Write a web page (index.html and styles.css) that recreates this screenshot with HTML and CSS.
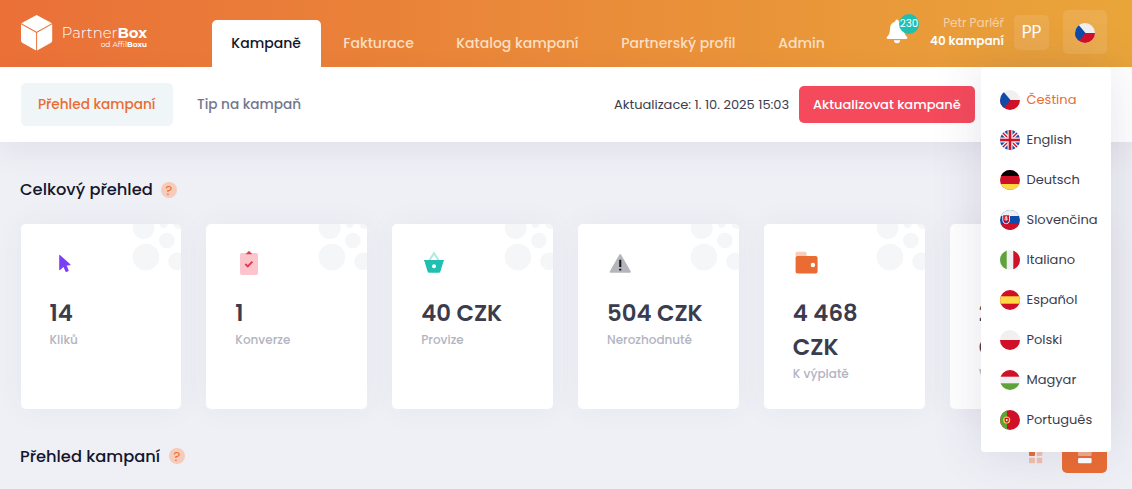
FILE: index.html
```html
<!DOCTYPE html>
<html lang="cs">
<head>
    <meta charset="UTF-8">
    <meta name="viewport" content="width=device-width, initial-scale=1.0">
    <title>PartnerBox</title>
    <link rel="stylesheet" href="styles.css">
</head>
<body>
    <svg class="defs" width="0" height="0">
        <symbol id="flag-cz" viewBox="0 0 20 20">
            <rect width="20" height="20" fill="#f0f0f0"/>
            <rect y="10" width="20" height="10" fill="#d01027"/>
            <path d="M0 0h2l8.500 10L2 20H0z" fill="#0f4ba8"/>
        </symbol>
        <symbol id="bubbles" viewBox="0 0 50 50">
            <g fill="#f5f6f8">
                <circle cx="12.700" cy="4" r="11"/>
                <circle cx="32.700" cy="0" r="4"/>
                <circle cx="48.200" cy="-1" r="6"/>
                <circle cx="35.900" cy="16.500" r="7.800"/>
                <circle cx="14.900" cy="33" r="13.300"/>
                <circle cx="45.900" cy="37.300" r="8.700"/>
            </g>
        </symbol>
    </svg>

    <header class="header">
        <a class="logo" href="#">
            <svg width="32" height="36" viewBox="0 0 32 36">
                <path d="M15.600 0 31 8.200 15.600 16.800 0.300 8.200z" fill="#fff"/>
                <path d="M0 9.200 15.100 17.700V35.600L1.200 27.800Q0 27 0 25.800z" fill="#fff"/>
                <path d="M31.200 9.200 16.100 17.700V35.600L30 27.800Q31.200 27 31.200 25.800z" fill="#fff"/>
            </svg>
            <span class="logo-text">
                <span class="logo-name">Partner<b>Box</b></span>
                <span class="logo-sub">od Affil<b>Boxu</b></span>
            </span>
        </a>
        <nav class="nav">
            <a class="nav-item active" href="#">Kampaně</a>
            <a class="nav-item fakturace" href="#">Fakturace</a>
            <a class="nav-item katalog" href="#">Katalog kampaní</a>
            <a class="nav-item profil" href="#">Partnerský profil</a>
            <a class="nav-item admin" href="#">Admin</a>
        </nav>
        <div class="topbar">
            <div class="bell">
                <svg width="22" height="26" viewBox="0 0 22 26">
                    <path d="M11 .5c1 0 1.700.7 1.800 2C16 3.400 17.700 6 17.900 9c.3 4.600.6 6.500 3 8.800.9 1 .5 2.200-.8 2.200H1.900C.6 20 .2 18.800 1.100 17.800c2.400-2.300 2.700-4.200 3-8.800C4.300 6 6 3.400 9.200 2.500 9.300 1.200 10 .5 11 .5zM7.800 21.300h6.400c-.3 2-1.400 3-3.200 3s-2.900-1-3.200-3z" fill="#fff"/>
                </svg>
                <span class="badge">230</span>
            </div>
            <div class="user">
                <span class="user-name">Petr Parléř</span>
                <span class="user-info">40 kampaní</span>
            </div>
            <div class="avatar">PP</div>
            <div class="lang">
                <svg class="flag" width="20" height="20"><use href="#flag-cz"/></svg>
                <ul class="lang-menu">
                    <li class="selected">
                        <svg class="flag" width="20" height="20"><use href="#flag-cz"/></svg>
                        <span>Čeština</span>
                    </li>
                    <li>
                        <svg class="flag" width="20" height="20" viewBox="0 0 20 20">
                            <rect width="20" height="20" fill="#0f4ba8"/>
                            <path d="M0 0 20 20M20 0 0 20" stroke="#f0f0f0" stroke-width="4"/>
                            <path d="M0 0 20 20M20 0 0 20" stroke="#d01027" stroke-width="1.300"/>
                            <path d="M10 0V20M0 10H20" stroke="#f0f0f0" stroke-width="5"/>
                            <path d="M10 0V20M0 10H20" stroke="#d01027" stroke-width="2.600"/>
                        </svg>
                        <span>English</span>
                    </li>
                    <li>
                        <svg class="flag" width="20" height="20" viewBox="0 0 20 20">
                            <rect width="20" height="20" fill="#d01027"/>
                            <rect width="20" height="6" fill="#000"/>
                            <rect y="14" width="20" height="6" fill="#ffda44"/>
                        </svg>
                        <span>Deutsch</span>
                    </li>
                    <li>
                        <svg class="flag" width="20" height="20" viewBox="0 0 20 20">
                            <rect width="20" height="20" fill="#0f4ba8"/>
                            <rect width="20" height="6" fill="#f0f0f0"/>
                            <rect y="14" width="20" height="6" fill="#d01027"/>
                            <path d="M2.300 4.500H10V10c0 2.400-1.600 3.600-3.850 4.300C3.900 13.600 2.300 12.400 2.300 10z" fill="#f0f0f0"/>
                            <path d="M3.200 5.300H9.100V10c0 1.900-1.200 2.900-2.950 3.400C4.400 12.900 3.200 11.900 3.200 10z" fill="#d01027"/>
                            <path d="M6.150 6v5M4.900 7.300h2.500M4.300 9.100h3.700" stroke="#f0f0f0" stroke-width=".9"/>
                            <path d="M4.200 11.800a2 1.500 0 0 1 3.900 0l-1.950 1.300z" fill="#0f4ba8"/>
                        </svg>
                        <span>Slovenčina</span>
                    </li>
                    <li>
                        <svg class="flag" width="20" height="20" viewBox="0 0 20 20">
                            <rect width="20" height="20" fill="#f0f0f0"/>
                            <rect width="6.700" height="20" fill="#5fa23a"/>
                            <rect x="13.300" width="6.700" height="20" fill="#d01027"/>
                        </svg>
                        <span>Italiano</span>
                    </li>
                    <li>
                        <svg class="flag" width="20" height="20" viewBox="0 0 20 20">
                            <rect width="20" height="20" fill="#d01027"/>
                            <rect y="6.300" width="20" height="7.400" fill="#ffda44"/>
                        </svg>
                        <span>Español</span>
                    </li>
                    <li>
                        <svg class="flag" width="20" height="20" viewBox="0 0 20 20">
                            <rect width="20" height="20" fill="#f0f0f0"/>
                            <rect y="10" width="20" height="10" fill="#d01027"/>
                        </svg>
                        <span>Polski</span>
                    </li>
                    <li>
                        <svg class="flag" width="20" height="20" viewBox="0 0 20 20">
                            <rect width="20" height="20" fill="#f0f0f0"/>
                            <rect width="20" height="6.700" fill="#d01027"/>
                            <rect y="13.300" width="20" height="6.700" fill="#5fa23a"/>
                        </svg>
                        <span>Magyar</span>
                    </li>
                    <li>
                        <svg class="flag" width="20" height="20" viewBox="0 0 20 20">
                            <rect width="20" height="20" fill="#d01027"/>
                            <rect width="7" height="20" fill="#5fa23a"/>
                            <circle cx="6.700" cy="10" r="3.500" fill="#ffda44"/>
                            <path d="M4.600 7.700h4.200v2.900a2.100 2.100 0 0 1-4.200 0z" fill="#d01027"/>
                            <path d="M5.900 9h1.600v1.500a.8.8 0 0 1-1.600 0z" fill="#f0f0f0"/>
                        </svg>
                        <span>Português</span>
                    </li>
                </ul>
            </div>
        </div>
    </header>

    <div class="subheader">
        <a class="sub-item active" href="#">Přehled kampaní</a>
        <a class="sub-item" href="#">Tip na kampaň</a>
        <span class="updated">Aktualizace: 1. 10. 2025 15:03</span>
        <button class="btn-update">Aktualizovat kampaně</button>
    </div>

    <main class="content">
        <div class="title-row">
            <h2 class="title t1">Celkový přehled</h2>
            <span class="help">?</span>
        </div>

        <div class="cards">
            <div class="card">
                <svg class="bubbles" width="50" height="50"><use href="#bubbles"/></svg>
                <svg class="icon" width="28" height="28" viewBox="0 0 28 28">
                    <path d="M9.200 5.600Q9.200 4.300 10.200 5.200L20.300 14.200Q21 15.200 19.900 15.300L16.700 15.600 18.700 20.400Q18.700 21 18.200 21.300L16.400 22Q15.800 22 15.500 21.500L13.500 16.900 10.200 20Q9.200 20.500 9.200 19.300z" fill="#7a3ff5"/>
                </svg>
                <div class="value">14</div>
                <div class="label">Kliků</div>
            </div>
            <div class="card">
                <svg class="bubbles" width="50" height="50"><use href="#bubbles"/></svg>
                <svg class="icon" width="28" height="28" viewBox="0 0 28 28">
                    <rect x="5" y="3" width="18" height="22" rx="2" fill="#fbc5cb"/>
                    <path d="M11 4.200Q11 2.700 12.300 2.700 12.600 1.300 14 1.300T15.700 2.700Q17 2.700 17 4.200z" fill="#dd3d50"/>
                    <path d="M10.300 14 12.800 16.400 17.400 11.600" fill="none" stroke="#dd3d50" stroke-width="1.900"/>
                </svg>
                <div class="value">1</div>
                <div class="label">Konverze</div>
            </div>
            <div class="card">
                <svg class="bubbles" width="50" height="50"><use href="#bubbles"/></svg>
                <svg class="icon" width="28" height="28" viewBox="0 0 28 28">
                    <path d="M7.500 11.500 13 3.300 18.500 11.500" fill="none" stroke="#aee7e0" stroke-width="1.900"/>
                    <path d="M3.400 10H22.600Q23.300 10 23.100 10.900H22.600L19.500 21.200Q19 22.700 17.600 22.700H8.400Q7 22.700 6.500 21.200L3.400 10.900H2.900Q2.700 10 3.400 10z" fill="#1fbfb1"/>
                    <circle cx="13" cy="16.200" r="2" fill="#fff"/>
                </svg>
                <div class="value">40 CZK</div>
                <div class="label">Provize</div>
            </div>
            <div class="card">
                <svg class="bubbles" width="50" height="50"><use href="#bubbles"/></svg>
                <svg class="icon" width="28" height="28" viewBox="0 0 28 28">
                    <path d="M12.400 4.500Q13.200 3.600 14 4.500L23.800 21.500Q24 22.700 23 22.700H3.500Q2.400 22.700 2.700 21.500z" fill="#b5b5bc"/>
                    <path d="M12.200 9.800h2.100v7.300h-2.100zM12.200 18.700h2.100v1.800h-2.100z" fill="#15161f"/>
                </svg>
                <div class="value">504 CZK</div>
                <div class="label">Nerozhodnuté</div>
            </div>
            <div class="card">
                <svg class="bubbles" width="50" height="50"><use href="#bubbles"/></svg>
                <svg class="icon" width="28" height="28" viewBox="0 0 28 28">
                    <rect x="2.600" y="1.800" width="11" height="8" rx="1.500" fill="#f8cdb9"/>
                    <path d="M4.600 6H22.600Q24.600 6 24.600 8V21.600Q24.600 23.600 22.600 23.600H4.600Q2.600 23.600 2.600 21.600V8Q2.600 6 4.600 6z" fill="#ea6c33"/>
                    <circle cx="19.900" cy="15" r="2.200" fill="#fff"/>
                </svg>
                <div class="value">4 468 CZK</div>
                <div class="label">K výplatě</div>
            </div>
            <div class="card">
                <div class="icon"></div>
                <div class="value">24<br>CZK</div>
                <div class="label">Vklad</div>
            </div>
        </div>

        <div class="title-row second">
            <h2 class="title t2">Přehled kampaní</h2>
            <span class="help">?</span>
            <div class="view-switch">
                <svg width="14" height="14" viewBox="0 0 14 14">
                    <rect width="6" height="6" rx="1" fill="#ea6c33"/>
                    <g fill="#f1c1ae">
                        <rect x="7.700" width="5.600" height="6" rx="1"/>
                        <rect y="7.700" width="6" height="5.500" rx="1"/>
                        <rect x="7.700" y="7.700" width="5.600" height="5.500" rx="1"/>
                    </g>
                </svg>
                <button class="btn-list">
                    <svg width="14" height="14" viewBox="0 0 14 14">
                        <rect y="0.500" width="13.600" height="5.500" rx="1" fill="#f1ab8a"/>
                        <rect y="8" width="13.600" height="5.200" rx="1.200" fill="#fff"/>
                    </svg>
                </button>
            </div>
        </div>
    </main>
</body>
</html>
```
FILE: styles.css
```css
* {
    box-sizing: border-box;
}

body {
    margin: 0;
    height: 489px;
    overflow: hidden;
    background-color: #eff0f6;
    color: #3b3c4d;
    font-family: Poppins, Inter, sans-serif;
    font-size: 13px;
}

a {
    text-decoration: none;
}

.defs {
    position: absolute;
}

.header {
    display: flex;
    height: 67px;
    padding: 0 25px 0 21px;
    background: linear-gradient(90deg, #ea7038, #e9a53a);
}

.logo {
    display: flex;
    width: 191px;
    padding-top: 15px;
    color: #fff;
}

.logo-text {
    display: flex;
    flex-direction: column;
    align-items: flex-end;
    width: 84px;
    margin-left: 10px;
    padding-top: 8px;
    font-family: Montserrat, Poppins, Inter, sans-serif;
    white-space: nowrap;
}

.logo-name {
    font-size: 14.8px;
    font-weight: 300;
    line-height: 20px;
}

.logo-name b {
    font-weight: 700;
}

.logo-sub {
    font-size: 7.5px;
    line-height: 4px;
}

.nav {
    display: flex;
    padding-top: 20px;
}

.nav-item {
    height: 47px;
    line-height: 46px;
    font-size: 14px;
    font-weight: 500;
    color: #fbdfc3;
    white-space: nowrap;
}

.nav-item.active {
    width: 109px;
    margin-right: 22.2px;
    padding-left: 19.3px;
    border-radius: 5px 5px 0 0;
    background-color: #fff;
    color: #15162c;
}

.fakturace {
    width: 113px;
}

.katalog {
    width: 165px;
}

.profil {
    width: 157px;
}

.topbar {
    display: flex;
    margin-left: auto;
}

.bell {
    position: relative;
    width: 34px;
    height: 32px;
    padding-top: 19px;
}

.badge {
    position: absolute;
    left: 13px;
    top: 14px;
    width: 20px;
    height: 20px;
    border-radius: 50%;
    background-color: #1fbfb1;
    color: #fff;
    font-size: 10.4px;
    line-height: 20px;
    text-align: center;
}

.user {
    display: flex;
    flex-direction: column;
    width: 84px;
    padding-top: 14px;
    text-align: right;
    line-height: 18px;
    font-size: 12px;
    white-space: nowrap;
}

.user-name {
    color: #f6d1a3;
}

.user-info {
    color: #fff;
    font-weight: 600;
}

.avatar {
    width: 35px;
    height: 35px;
    margin: 15px 14px 0 10px;
    border-radius: 5px;
    background-color: rgba(255, 255, 255, 0.1);
    color: #fff;
    font-size: 17px;
    font-weight: 400;
    line-height: 34px;
    text-align: center;
}

.lang {
    position: relative;
    width: 44px;
    height: 44px;
    margin-top: 10px;
    padding: 13px 12px;
    border-radius: 5px;
    background-color: rgba(255, 255, 255, 0.1);
}

.flag {
    display: block;
    flex: none;
    border-radius: 50%;
}

.lang-menu {
    position: absolute;
    z-index: 10;
    top: 57px;
    right: -4px;
    width: 130px;
    height: 385px;
    margin: 0;
    padding: 13px 0 0 19px;
    list-style: none;
    border-radius: 4px;
    background-color: #fff;
    box-shadow: 0 0 50px rgba(82, 63, 105, 0.15);
}

.lang-menu li {
    display: flex;
    align-items: center;
    height: 40px;
    gap: 6.5px;
    font-size: 13px;
}

.lang-menu .selected {
    color: #ea6c33;
}

.subheader {
    display: flex;
    align-items: center;
    height: 75px;
    padding: 0 157px 0 21px;
    background-color: #fff;
    box-shadow: 0 10px 30px rgba(82, 63, 105, 0.08);
}

.sub-item {
    height: 43px;
    line-height: 43px;
    font-size: 13.65px;
    font-weight: 500;
    color: #74768d;
    white-space: nowrap;
}

.sub-item.active {
    width: 152px;
    margin-right: 24px;
    padding-left: 17px;
    border-radius: 5px;
    background-color: #f0f5f8;
    color: #ea6c33;
}

.updated {
    width: 175px;
    margin: 0 10px 0 auto;
    white-space: nowrap;
}

.btn-update {
    width: 176px;
    height: 37px;
    padding: 0 0 0 14px;
    border: none;
    border-radius: 5px;
    background-color: #f5495c;
    color: #fff;
    font-family: inherit;
    font-size: 13px;
    font-weight: 500;
    text-align: left;
    white-space: nowrap;
}

.content {
    padding: 34px 21.5px 0 20.5px;
}

.title-row {
    display: flex;
    align-items: center;
    height: 28px;
    margin-bottom: 20px;
}

.title {
    margin: -1px 0 0 -0.5px;
    font-size: 16.3px;
    font-weight: 500;
    color: #15162c;
    white-space: nowrap;
}

.t1 {
    width: 141px;
}

.t2 {
    width: 149px;
    margin-top: 1px;
}

.help {
    width: 16px;
    height: 16px;
    border-radius: 50%;
    background-color: #f6cbb9;
    color: #ea6c33;
    font-size: 13px;
    font-weight: 400;
    line-height: 17px;
    text-align: center;
}

.cards {
    display: grid;
    grid-template-columns: repeat(6, minmax(0, 1fr));
    gap: 25px;
}

.card {
    position: relative;
    height: 185px;
    padding: 26px 28px 0 29px;
    border-radius: 5px;
    background-color: #fff;
    box-shadow: 0 0 30px rgba(82, 63, 105, 0.05);
}

.bubbles {
    position: absolute;
    top: 0;
    right: 0;
    overflow: hidden;
    border-top-right-radius: 5px;
}

.icon {
    display: block;
    height: 28px;
}

.value {
    margin-top: 18px;
    font-size: 22.8px;
    font-weight: 600;
    line-height: 34px;
}

.label {
    margin-top: 1px;
    font-size: 12px;
    font-weight: 500;
    line-height: 18px;
    color: #b3b4c2;
    white-space: nowrap;
}

.second {
    margin-top: 33px;
}

.view-switch {
    display: flex;
    align-items: center;
    gap: 19px;
    margin: 1px 3.5px 0 auto;
}

.btn-list {
    display: flex;
    align-items: center;
    justify-content: center;
    width: 45px;
    height: 33px;
    padding: 0;
    border: none;
    border-radius: 5px;
    background-color: #ea6c33;
}
```
